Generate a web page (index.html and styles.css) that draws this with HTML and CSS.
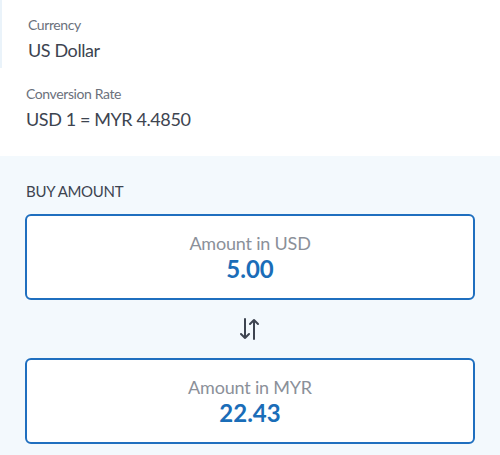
FILE: index.html
```html
<!doctype html>
<html lang="en">
<head>
<meta charset="utf-8">
<title>Buy Currency</title>
<link rel="stylesheet" href="styles.css">
</head>
<body>
    <div class="info">
        <div class="field field-first">
            <div class="label">Currency</div>
            <div class="value">US Dollar</div>
        </div>
        <div class="field">
            <div class="label">Conversion Rate</div>
            <div class="value">USD 1 = MYR 4.4850</div>
        </div>
    </div>
    <div class="buy">
        <h4>BUY AMOUNT</h4>
        <div class="amount">
            <div class="amount-label">Amount in USD</div>
            <div class="amount-value">5.00</div>
        </div>
        <div class="swap">
            <svg width="20" height="22" viewBox="0 0 20 22" fill="none" stroke="#3d4450" stroke-width="2" stroke-linecap="round" stroke-linejoin="round">
                <path d="M5 1v19M1 16l4 4 4-4"/>
                <path d="M14 21V2M10 6l4-4 4 4"/>
            </svg>
        </div>
        <div class="amount">
            <div class="amount-label">Amount in MYR</div>
            <div class="amount-value">22.43</div>
        </div>
    </div>
</body>
</html>
```

FILE: styles.css
```css
BODY {
    font-family: Lato, "Open Sans", Arial, sans-serif;
    color: #3d4450;
    margin: 0;
    padding: 0;
    background: #fff;
}
.info {
    padding: 0 0 0 26px;
}
.field {
    padding: 17px 0 0 0;
}
.field-first {
    margin-left: -26px;
    padding: 16px 0 4px 26px;
    border-left: solid 2px #eaf3fa;
}
.label {
    font-size: 14px;
    color: #6b717c;
    line-height: 18px;
    letter-spacing: -0.4px;
}
.value {
    font-size: 18px;
    line-height: 28px;
    margin-top: 2px;
    letter-spacing: -0.4px;
}
.buy {
    margin-top: 23px;
    background: #f3f9fd;
    padding: 25px 25px 12px 25px;
}
H4 {
    margin: 0 0 13px 1px;
    font-size: 15px;
    font-weight: normal;
    line-height: 20px;
    letter-spacing: -0.3px;
}
.amount {
    background: #fff;
    border: solid 2px #1f6fbf;
    border-radius: 6px;
    height: 82px;
    display: flex;
    flex-direction: column;
    align-items: center;
    justify-content: center;
}
.amount-label {
    font-size: 18px;
    color: #8b9099;
    line-height: 23px;
    letter-spacing: -0.2px;
}
.amount-value {
    font-size: 24px;
    font-weight: bold;
    color: #1a6db8;
    line-height: 28px;
}
.swap {
    height: 58px;
    display: flex;
    align-items: center;
    justify-content: center;
}
```
